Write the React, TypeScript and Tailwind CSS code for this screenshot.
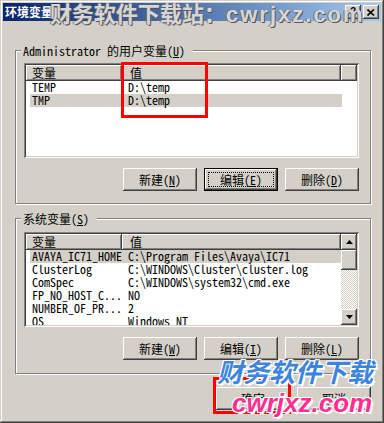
import clsx from 'clsx';

const FONT = "font-['Noto_Sans_Mono_CJK_SC','Liberation_Mono','Noto_Sans_CJK_SC',monospace]";
const RAISED = "shadow-[inset_-1px_-1px_#404040,inset_1px_1px_#ffffff,inset_-2px_-2px_#808080,inset_2px_2px_#d4d0c8]";
const SUNKEN = "shadow-[inset_1px_1px_#808080,inset_-1px_-1px_#ffffff,inset_2px_2px_#404040,inset_-2px_-2px_#d4d0c8]";

type Row = { name: string; value: string };

const userRows: Row[] = [
    { name: 'TEMP', value: 'D:\\temp' },
    { name: 'TMP', value: 'D:\\temp' },
];

const sysRows: Row[] = [
    { name: 'AVAYA_IC71_HOME', value: 'C:\\Program Files\\Avaya\\IC71' },
    { name: 'ClusterLog', value: 'C:\\WINDOWS\\Cluster\\cluster.log' },
    { name: 'ComSpec', value: 'C:\\WINDOWS\\system32\\cmd.exe' },
    { name: 'FP_NO_HOST_C...', value: 'NO' },
    { name: 'NUMBER_OF_PR...', value: '2' },
    { name: 'OS', value: 'Windows NT' },
];

function Mn({ label, k }: { label: string; k: string }) {
    return (
        <span>
            {label}(<u>{k}</u>)
        </span>
    );
}

function Btn({ children, focus, className }: { children: React.ReactNode; focus?: boolean; className?: string }) {
    if (focus) {
        return (
            <div className={clsx("h-[23px] w-[74px] border border-black bg-[#d4d0c8] shadow-[inset_-1px_-1px_#404040,inset_1px_1px_#ffffff,inset_-2px_-2px_#808080]", className)}>
                <div className="m-[3px] h-[15px] border border-dotted border-black flex items-center justify-center leading-[13px]">
                    {children}
                </div>
            </div>
        );
    }
    return (
        <div className={clsx("h-[23px] w-[74px] bg-[#d4d0c8] flex items-center justify-center leading-[13px]", RAISED, className)}>
            {children}
        </div>
    );
}

function Arrow({ down }: { down?: boolean }) {
    return (
        <svg width="7" height="4" viewBox="0 0 7 4">
            <polygon points={down ? '0,0 7,0 3.5,4' : '3.5,0 7,4 0,4'} fill="#000" />
        </svg>
    );
}

function ScrollBar() {
    return (
        <div className="w-[16px] flex flex-col bg-[repeating-conic-gradient(#d4d0c8_0_25%,#ffffff_0_50%)] bg-[length:2px_2px]">
            <div className={clsx("h-[16px] bg-[#d4d0c8] flex items-center justify-center", RAISED)}>
                <Arrow />
            </div>
            <div className={clsx("h-[20px] bg-[#d4d0c8]", RAISED)} />
            <div className="flex-1" />
            <div className={clsx("h-[16px] bg-[#d4d0c8] flex items-center justify-center", RAISED)}>
                <Arrow down />
            </div>
        </div>
    );
}

function ListView({ rows, selected, scroll }: { rows: Row[]; selected: number; scroll?: boolean }) {
    return (
        <div className={clsx("w-[335px] h-[95px] bg-white p-[2px] flex", SUNKEN)}>
            <div className="flex-1 flex flex-col overflow-hidden">
                <div className="flex h-[16px] shrink-0 leading-[16px] bg-[#d4d0c8]">
                    <div className={clsx("w-[96px] pl-[6px]", RAISED)}>变量</div>
                    <div className={clsx("w-[219px] pl-[8px]", RAISED)}>值</div>
                    <div className={clsx("flex-1", RAISED)} />
                </div>
                {rows.map((r, i) => (
                    <div
                        key={r.name}
                        className={clsx("ml-[4px] w-[312px] shrink-0 flex h-[13px] leading-[11px] whitespace-nowrap", i === selected && "bg-[#d4d0c8]")}
                    >
                        <div className="w-[98px] pl-[2px]">{r.name}</div>
                        <div className="flex-1">{r.value}</div>
                    </div>
                ))}
            </div>
            {scroll && <ScrollBar />}
        </div>
    );
}

function GroupBox({ label, className, children }: { label: React.ReactNode; className?: string; children: React.ReactNode }) {
    return (
        <div className={clsx("relative ml-[12px] w-[356px] border border-[#808080] shadow-[inset_1px_1px_#ffffff,1px_1px_#ffffff] px-[8px]", className)}>
            <span className="absolute left-[5px] top-[-7px] px-[2px] pr-[8px] bg-[#d4d0c8] leading-[13px]">{label}</span>
            {children}
        </div>
    );
}

export default function App() {
    return (
        <div className={clsx("relative w-[384px] h-[423px] bg-[#d4d0c8] p-[3px] text-[12px] text-black overflow-hidden shadow-[inset_-1px_-1px_#404040,inset_1px_1px_#d4d0c8,inset_-2px_-2px_#808080,inset_2px_2px_#ffffff]", FONT)}>
            {/* title bar */}
            <div className="h-[18px] flex items-center justify-between bg-gradient-to-r from-[#0a246a] to-[#a6caf0] pl-[2px] pr-[2px]">
                <span className="text-white font-bold leading-[14px] font-['Noto_Sans_CJK_SC',sans-serif]">环境变量</span>
                <div className="flex">
                    <div className={clsx("w-[16px] h-[14px] bg-[#d4d0c8] flex items-center justify-center text-[10px] font-bold leading-none font-['Liberation_Sans',sans-serif]", RAISED)}>?</div>
                    <div className={clsx("ml-[2px] w-[16px] h-[14px] bg-[#d4d0c8] flex items-center justify-center", RAISED)}>
                        <svg width="8" height="7" viewBox="0 0 8 7">
                            <path d="M0.5 0.5 L7 6.5 M7 0.5 L0.5 6.5" stroke="#000" strokeWidth="1.6" />
                        </svg>
                    </div>
                </div>
            </div>

            <GroupBox label={<>Administrator 的用户变量<Mn label="" k="U" /></>} className="mt-[29px] pt-[12px] pb-[12px]">
                <ListView rows={userRows} selected={1} />
                <div className="mt-[10px] w-[335px] flex justify-end gap-[7px]">
                    <Btn><Mn label="新建" k="N" /></Btn>
                    <Btn focus><Mn label="编辑" k="E" /></Btn>
                    <Btn><Mn label="删除" k="D" /></Btn>
                </div>
            </GroupBox>

            <GroupBox label={<Mn label="系统变量" k="S" />} className="mt-[14px] pt-[13px] pb-[13px]">
                <ListView rows={sysRows} selected={0} scroll />
                <div className="mt-[10px] w-[335px] flex justify-end gap-[7px]">
                    <Btn><Mn label="新建" k="W" /></Btn>
                    <Btn><Mn label="编辑" k="I" /></Btn>
                    <Btn><Mn label="删除" k="L" /></Btn>
                </div>
            </GroupBox>

            <div className="mt-[13px] ml-[12px] w-[356px] flex justify-end gap-[7px]">
                <Btn>确定</Btn>
                <Btn>取消</Btn>
            </div>

            {/* annotation boxes */}
            <div className="absolute left-[121px] top-[62px] w-[87px] h-[56px] border-[3px] border-[#ff0000]" />
            <div className="absolute left-[213px] top-[377px] w-[78px] h-[37px] border-[3px] border-[#ff0000]" />

            {/* watermarks */}
            <div className="absolute left-[50px] top-[0px] text-[22px] leading-[24px] font-bold text-[#d6d6d6] whitespace-nowrap font-['Noto_Sans_CJK_SC',sans-serif] [text-shadow:1px_1px_0_#555555,-1px_0_0_#777777]">
                财务软件下载站：<span className="font-['Liberation_Sans',sans-serif] tracking-[2px]">cwrjxz.com</span>
            </div>
            <div className="absolute left-[217px] top-[356px] text-[26px] leading-[30px] font-bold italic text-[#3f84dc] whitespace-nowrap font-['Noto_Sans_CJK_SC',sans-serif] [text-shadow:1px_1px_0_#fff,-1px_-1px_0_#fff,1px_-1px_0_#fff,-1px_1px_0_#fff,2px_2px_0_#fff]">
                财务软件下载
            </div>
            <div className="absolute left-[232px] top-[388px] text-[26px] leading-[30px] font-bold italic text-[#ff2e8f] whitespace-nowrap font-['Liberation_Sans',sans-serif] [text-shadow:1px_1px_0_#fff,-1px_-1px_0_#fff,1px_-1px_0_#fff,-1px_1px_0_#fff,2px_2px_0_#fff]">
                cwrjxz.com
            </div>
        </div>
    );
}
